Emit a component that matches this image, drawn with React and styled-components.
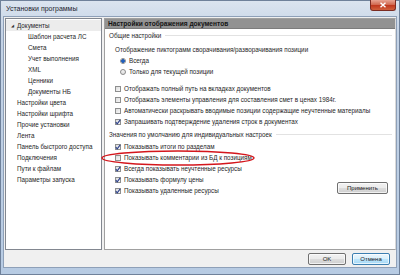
import React from "react"
import styled, { createGlobalStyle } from "styled-components"

const Global = createGlobalStyle`
  html, body { margin: 0; padding: 0; background: #fff; }
  * { box-sizing: border-box; }
  body { font-family: "Liberation Sans", Arial, sans-serif; }
`

const tree = [
  { label: "Документы", open: true, selected: true },
  { label: "Шаблон расчета ЛС", child: true },
  { label: "Смета", child: true },
  { label: "Учет выполнения", child: true },
  { label: "XML", child: true },
  { label: "Ценники", child: true },
  { label: "Документы НБ", child: true },
  { label: "Настройки цвета" },
  { label: "Настройки шрифта" },
  { label: "Прочие установки" },
  { label: "Лента" },
  { label: "Панель быстрого доступа" },
  { label: "Подключения" },
  { label: "Пути к файлам" },
  { label: "Параметры запуска" },
]

const general = [
  { label: "Отображать полный путь на вкладках документов", on: false },
  { label: "Отображать элементы управления для составления смет в ценах 1984г.", on: false },
  { label: "Автоматически раскрывать вводимые позиции содержащие неучтенные материалы", on: false },
  { label: "Запрашивать подтверждение удаления строк в документах", on: true },
]

const defaults = [
  { label: "Показывать итоги по разделам", on: true },
  { label: "Показывать комментарии из БД к позициям", on: false },
  { label: "Всегда показывать неучтенные ресурсы", on: true },
  { label: "Показывать формулу цены", on: true },
  { label: "Показывать удаленные ресурсы", on: true },
]

function Check({ on }) {
  return (
    <Box>
      {on && (
        <svg width="6" height="6" viewBox="0 0 6 6">
          <path d="M0.8 3.2 L2.2 4.8 L5.2 0.8" fill="none" stroke="#2a3f8a" strokeWidth="1.1" />
        </svg>
      )}
    </Box>
  )
}

export default function App() {
  return (
    <>
      <Global />
      <Frame>
        <TitleBar>
          <Title>Установки программы</Title>
          <Close>
            <svg width="8" height="6" viewBox="0 0 8 6">
              <path d="M1.5 0.8 L6.5 5.2 M6.5 0.8 L1.5 5.2" stroke="#fff" strokeWidth="1.4" />
            </svg>
          </Close>
        </TitleBar>
        <Client>
          <Main>
            <Tree>
              {tree.map((it) => (
                <TreeRow key={it.label} $child={it.child} $selected={it.selected}>
                  {it.open && <Arrow>◢</Arrow>}
                  {it.label}
                </TreeRow>
              ))}
            </Tree>
            <Panel>
              <Header>Настройки отображения документов</Header>
              <Content>
                <GroupTitle>Общие настройки</GroupTitle>
                <Indent>
                  <Row $top={3}>Отображение пиктограмм сворачивания/разворачивания позиции</Row>
                  <Radios>
                    <Row>
                      <Radio $on />
                      Всегда
                    </Row>
                    <Row>
                      <Radio />
                      Только для текущей позиции
                    </Row>
                  </Radios>
                  <List $top={6}>
                    {general.map((it) => (
                      <Row key={it.label}>
                        <Check on={it.on} />
                        {it.label}
                      </Row>
                    ))}
                  </List>
                </Indent>
                <GroupTitle $top={2}>Значения по умолчанию для индивидуальных настроек</GroupTitle>
                <Bottom>
                  <Indent>
                    <List $top={1}>
                      {defaults.map((it) => (
                        <Row key={it.label}>
                          <Check on={it.on} />
                          {it.label}
                        </Row>
                      ))}
                    </List>
                  </Indent>
                  <Button>Применить</Button>
                </Bottom>
              </Content>
            </Panel>
          </Main>
          <Footer>
            <Button $w={38}>OK</Button>
            <Button $w={38} $default>Отмена</Button>
          </Footer>
        </Client>
        <Ellipse width="156" height="18" viewBox="0 0 156 18">
          <ellipse cx="78" cy="9" rx="76" ry="7" fill="none" stroke="#d4161c" strokeWidth="1.4" />
        </Ellipse>
      </Frame>
    </>
  )
}

const Frame = styled.div`
  position: relative;
  width: 400px;
  height: 275px;
  display: flex;
  flex-direction: column;
  background: linear-gradient(180deg, #dbe4ef 0%, #c4d3e6 12%, #b7cbe3 100%);
  border: 1px solid #6f819a;
  padding: 0 2px 6px 2px;
  font-size: 6.3px;
  color: #262626;
`

const TitleBar = styled.div`
  height: 15px;
  display: flex;
  align-items: center;
  justify-content: space-between;
  padding-left: 3px;
`

const Title = styled.div`
  font-size: 7px;
  color: #1e2530;
  margin-top: -1px;
`

const Close = styled.div`
  align-self: flex-start;
  width: 26px;
  height: 11px;
  margin-right: 1px;
  margin-top: -1px;
  display: flex;
  align-items: center;
  justify-content: center;
  border: 1px solid #7a2b22;
  border-top: none;
  border-radius: 0 0 3px 3px;
  background: linear-gradient(180deg, #e8a493 0%, #d26b53 45%, #c0391f 55%, #d1603c 100%);
`

const Client = styled.div`
  flex: 1;
  display: flex;
  flex-direction: column;
  background: #f0f0f0;
  border: 1px solid #8ea0b8;
`

const Main = styled.div`
  flex: 1;
  display: flex;
  gap: 2px;
  padding: 1px 0 0 1px;
`

const Tree = styled.div`
  width: 97px;
  background: #fff;
  border: 1px solid #828790;
  padding-top: 0.5px;
`

const TreeRow = styled.div`
  height: 11px;
  display: flex;
  align-items: center;
  padding-left: ${(p) => (p.$child ? 22 : 11)}px;
  background: ${(p) => (p.$selected ? "#ececec" : "transparent")};
  white-space: nowrap;
`

const Arrow = styled.span`
  font-size: 4px;
  color: #333;
  margin-left: -6px;
  margin-right: 3px;
`

const Panel = styled.div`
  flex: 1;
  display: flex;
  flex-direction: column;
  background: #fff;
  border: 1px solid #a0a0a0;
  border-right-color: #d8d8d8;
`

const Header = styled.div`
  height: 10px;
  display: flex;
  align-items: center;
  padding-left: 3px;
  background: #929292;
  border-bottom: 1px solid #7c7c7c;
  font-weight: bold;
  font-size: 6.6px;
  color: #141414;
  white-space: nowrap;
`

const Content = styled.div`
  padding: 1px 3px 0 4px;
  display: flex;
  flex-direction: column;
`

const GroupTitle = styled.div`
  height: 11px;
  margin-top: ${(p) => p.$top || 0}px;
  display: flex;
  align-items: center;
  gap: 4px;
  white-space: nowrap;
  &::after {
    content: "";
    flex: 1;
    height: 1px;
    background: #e2e2e2;
  }
`

const Indent = styled.div`
  padding-left: 6px;
  display: flex;
  flex-direction: column;
`

const Row = styled.div`
  height: 11px;
  margin-top: ${(p) => p.$top || 0}px;
  display: flex;
  align-items: center;
  gap: 3px;
  white-space: nowrap;
`

const Radios = styled.div`
  padding-left: 5px;
`

const Radio = styled.span`
  width: 6px;
  height: 6px;
  border-radius: 50%;
  border: 1px solid #8a8a8a;
  background: ${(p) =>
    p.$on
      ? "radial-gradient(circle, #1f5fbf 0 1.6px, #dfe8f4 2px)"
      : "linear-gradient(180deg, #f4f4f4, #dedede)"};
`

const List = styled.div`
  margin-top: ${(p) => p.$top || 0}px;
  display: flex;
  flex-direction: column;
`

const Box = styled.span`
  width: 6px;
  height: 6px;
  border: 1px solid #8e8f8f;
  background: linear-gradient(135deg, #dcdcdc, #f8f8f8);
  display: flex;
  align-items: center;
  justify-content: center;
  svg { flex-shrink: 0; }
`

const Bottom = styled.div`
  display: flex;
  justify-content: space-between;
  align-items: flex-end;
  padding-right: 4px;
`

const Button = styled.div`
  width: ${(p) => p.$w || 51}px;
  height: 12px;
  margin-bottom: ${(p) => (p.$w ? 0 : 2)}px;
  display: flex;
  align-items: center;
  justify-content: center;
  font-size: 6px;
  color: #1b1b1b;
  border: 1px solid ${(p) => (p.$default ? "#3c7fb1" : "#707070")};
  border-radius: 2px;
  background: ${(p) =>
    p.$default
      ? "linear-gradient(180deg, #eaf6fd 0%, #d9f0fc 50%, #bee6fd 51%, #a7d9f5 100%)"
      : "linear-gradient(180deg, #f2f2f2 0%, #ebebeb 50%, #dddddd 51%, #cfcfcf 100%)"};
  box-shadow: inset 0 0 0 1px rgba(255, 255, 255, 0.7);
`

const Footer = styled.div`
  height: 17px;
  display: flex;
  justify-content: flex-end;
  align-items: center;
  gap: 6px;
  padding: 1px 6px 0 0;
`

const Ellipse = styled.svg`
  position: absolute;
  left: 99px;
  top: 148px;
  pointer-events: none;
`
